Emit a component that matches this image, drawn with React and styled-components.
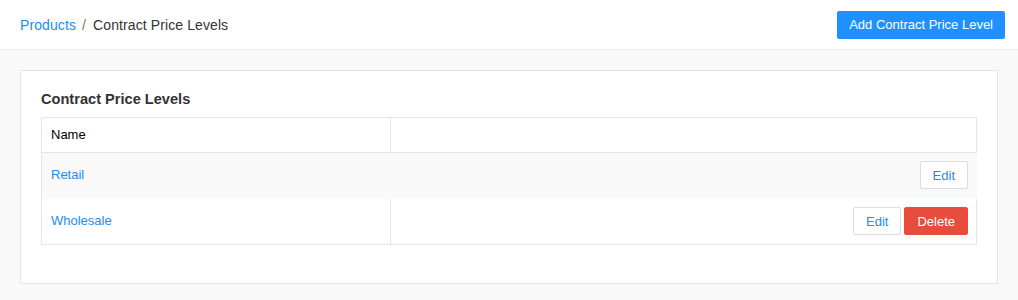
import React from 'react';
import styled, { createGlobalStyle } from 'styled-components';

const GlobalStyle = createGlobalStyle`
  html, body {
    margin: 0;
    padding: 0;
    background: #f9f9f9;
    font-family: 'Liberation Sans', Arial, sans-serif;
    color: #333;
  }
  * { box-sizing: border-box; }
`

const TopBar = styled.header`
  display: flex;
  align-items: center;
  justify-content: space-between;
  height: 50px;
  padding: 0 13px 0 20px;
  background: #fff;
  border-bottom: 1px solid #e8e8e8;
`

const Breadcrumb = styled.nav`
  display: flex;
  align-items: center;
  font-size: 14px;
  letter-spacing: 0.1px;
  color: #333;
`

const Crumb = styled.a`
  color: #1e8cf0;
  text-decoration: none;
  cursor: pointer;
`

const Separator = styled.span`
  color: #777;
  margin: 0 7px 0 6px;
`

const Button = styled.button`
  height: 28px;
  padding: 0 ${p => p.$variant === 'primary' ? '11px' : '12px'};
  font-family: 'Liberation Sans', Arial, sans-serif;
  font-size: 13px;
  border-radius: 2px;
  cursor: pointer;
  border: 1px solid ${p => p.$variant === 'primary' ? '#1e90ff' : p.$variant === 'danger' ? '#e74c3c' : '#dddddd'};
  background: ${p => p.$variant === 'primary' ? '#1e90ff' : p.$variant === 'danger' ? '#e74c3c' : '#fff'};
  color: ${p => p.$variant === 'default' ? '#1e8cf0' : '#fff'};
`

const Content = styled.main`
  padding: 20px;
`

const Card = styled.section`
  background: #fff;
  border: 1px solid #e5e5e5;
  padding: 20px 20px 38px;
`

const CardTitle = styled.h2`
  margin: 0 0 9px;
  font-size: 14.6px;
  line-height: 17px;
  font-weight: bold;
  color: #333;
`

const Table = styled.table`
  width: 100%;
  table-layout: fixed;
  border-collapse: separate;
  border-spacing: 0;
  border-top: 1px solid #e5e5e5;
  border-left: 1px solid #e5e5e5;
  font-size: 13px;
`

const Row = styled.tr`
  background: ${p => p.$highlight ? '#f9f9f9' : '#fff'};
`

const Cell = styled.td`
  padding: ${p => p.$head ? '9px' : '8px 8px 9px 9px'};
  line-height: 16px;
  border-right: 1px solid ${p => p.$highlight ? '#f9f9f9' : '#e5e5e5'};
  border-bottom: 1px solid ${p => p.$highlight ? '#f9f9f9' : '#e5e5e5'};
  color: ${p => p.$head ? '#000' : '#333'};
  vertical-align: middle;
  text-align: ${p => p.$right ? 'right' : 'left'};
`

const NameLink = styled.a`
  color: #1e8cf0;
  text-decoration: none;
  cursor: pointer;
`

const Actions = styled.div`
  display: flex;
  justify-content: flex-end;
  gap: 3px;
`

const levels = [
  { name: 'Retail', canDelete: false },
  { name: 'Wholesale', canDelete: true },
];

const App = () => {
  return (
    <>
      <GlobalStyle />
      <TopBar>
        <Breadcrumb>
          <Crumb>Products</Crumb>
          <Separator>/</Separator>
          <span>Contract Price Levels</span>
        </Breadcrumb>
        <Button $variant="primary">Add Contract Price Level</Button>
      </TopBar>
      <Content>
        <Card>
          <CardTitle>Contract Price Levels</CardTitle>
          <Table>
            <colgroup>
              <col style={{ width: '349px' }} />
              <col />
            </colgroup>
            <tbody>
              <Row>
                <Cell $head>Name</Cell>
                <Cell $head></Cell>
              </Row>
              {levels.map((level, idx) => (
                <Row key={level.name} $highlight={idx === 0}>
                  <Cell $highlight={idx === 0}><NameLink>{level.name}</NameLink></Cell>
                  <Cell $highlight={idx === 0} $right>
                    <Actions>
                      <Button $variant="default">Edit</Button>
                      {level.canDelete && <Button $variant="danger">Delete</Button>}
                    </Actions>
                  </Cell>
                </Row>
              ))}
            </tbody>
          </Table>
        </Card>
      </Content>
    </>
  )
}

export default App;
